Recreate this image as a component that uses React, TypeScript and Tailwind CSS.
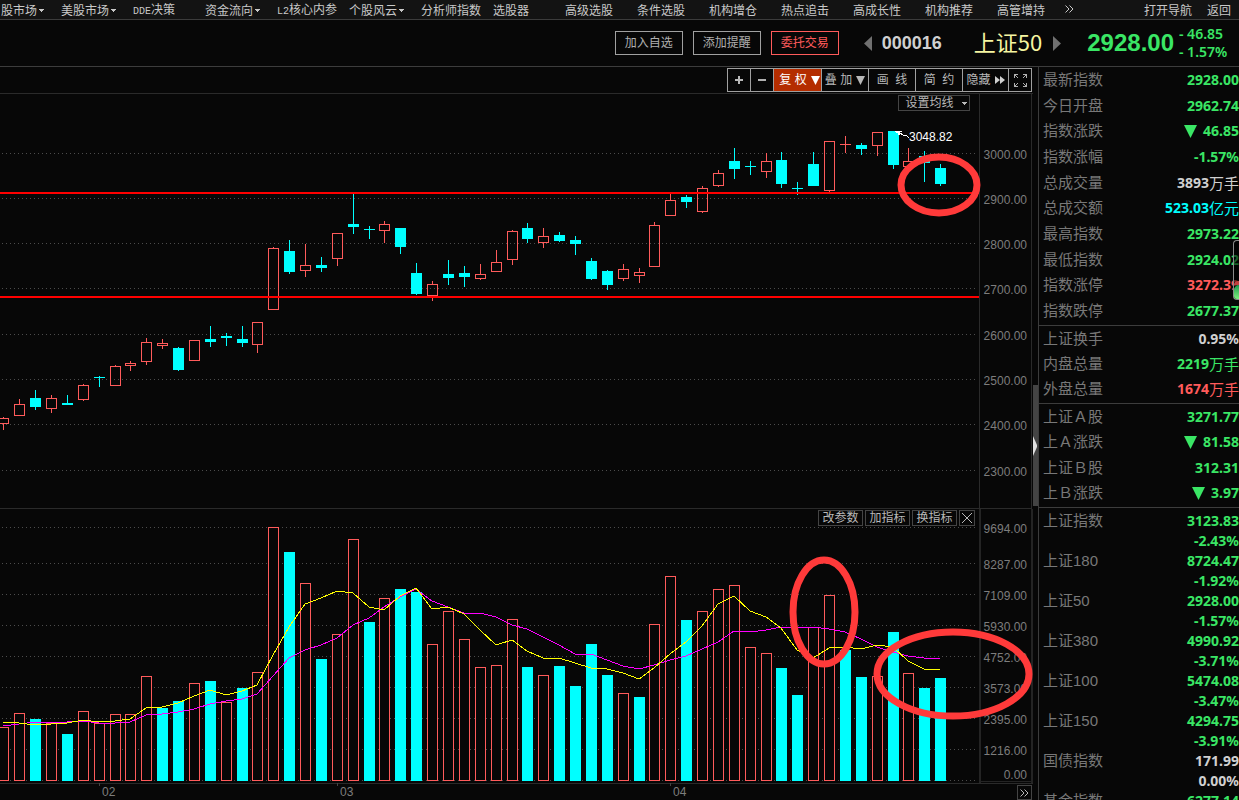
import React from 'react';
import { clsx } from 'clsx';

const UP = '#ff5b5b';
const DOWN = '#00ffff';
const MARK = '#ff3a3a';

/* [rising, high, body top, body bottom, low] */
type Candle = [0 | 1, number, number, number, number];

const CANDLES: Candle[] = [
    [1, 417, 418, 424, 430], [1, 399, 404, 416, 416], [0, 390, 398, 407, 410], [1, 395, 398, 409, 413],
    [0, 395, 403, 405, 405], [1, 384, 385, 400, 401], [0, 376, 377, 378, 387], [1, 365, 366, 386, 386],
    [1, 361, 363, 366, 371], [1, 338, 342, 362, 365], [1, 339, 343, 346, 349], [0, 347, 348, 370, 371],
    [1, 340, 340, 361, 361], [0, 326, 339, 342, 347], [0, 333, 336, 338, 346], [0, 326, 339, 343, 347],
    [1, 322, 322, 345, 353], [1, 247, 248, 310, 310], [0, 240, 251, 272, 274], [1, 244, 265, 271, 277],
    [0, 257, 265, 268, 272], [1, 233, 233, 259, 266], [0, 194, 224, 227, 234], [0, 226, 229, 230, 239],
    [1, 221, 224, 231, 243], [0, 228, 228, 247, 254], [0, 263, 273, 294, 295], [1, 281, 284, 296, 301],
    [0, 260, 274, 278, 285], [0, 266, 273, 277, 287], [1, 264, 274, 279, 280], [1, 250, 262, 272, 272],
    [1, 230, 231, 260, 265], [0, 223, 228, 239, 243], [1, 228, 236, 243, 248], [0, 232, 235, 241, 242],
    [0, 236, 240, 244, 255], [0, 258, 261, 279, 280], [0, 270, 271, 285, 290], [1, 264, 269, 279, 281],
    [1, 268, 272, 276, 283], [1, 222, 225, 267, 267], [1, 194, 200, 216, 216], [0, 195, 197, 202, 208],
    [1, 186, 188, 212, 213], [1, 170, 173, 186, 187], [0, 148, 161, 169, 179], [0, 161, 166, 167, 175],
    [1, 153, 161, 172, 178], [0, 152, 160, 184, 188], [0, 182, 188, 189, 195], [0, 152, 164, 186, 186],
    [1, 141, 141, 191, 192], [1, 136, 144, 145, 153], [0, 143, 145, 149, 155], [1, 132, 132, 146, 156],
    [0, 131, 131, 165, 169], [1, 148, 161, 167, 167], [0, 151, 156, 163, 182], [0, 164, 168, 184, 186],
];

/* [rising, bar top] */
const VOLUMES: [0 | 1, number][] = [
    [1, 727], [1, 713], [0, 719], [1, 723], [0, 734], [1, 711], [1, 723], [1, 714], [1, 714], [1, 676],
    [0, 708], [0, 701], [1, 683], [0, 681], [1, 702], [0, 688], [1, 672], [1, 527], [0, 552], [1, 583],
    [0, 659], [1, 634], [1, 539], [0, 622], [1, 598], [0, 589], [0, 592], [1, 644], [1, 611], [1, 639],
    [1, 667], [1, 665], [1, 619], [0, 667], [1, 675], [0, 666], [0, 686], [0, 644], [0, 675], [1, 693],
    [0, 697], [1, 624], [1, 576], [0, 620], [1, 611], [1, 589], [1, 585], [1, 647], [1, 653], [0, 668],
    [0, 695], [1, 627], [1, 595], [0, 650], [0, 677], [1, 676], [0, 632], [1, 673], [0, 688], [0, 678],
];

const MA5 = [
    722, 723, 725, 724, 723, 720, 722, 721, 719, 708, 707, 703, 696, 690, 695, 691, 685, 655, 627, 604,
    598, 591, 593, 607, 610, 596, 588, 609, 607, 614, 630, 645, 640, 651, 658, 658, 663, 668, 669, 673,
    679, 668, 654, 642, 626, 604, 596, 611, 617, 628, 650, 658, 648, 647, 649, 645, 647, 661, 669, 669,
];

const MA10 = [
    726, 724, 722, 722, 722, 721, 723, 723, 722, 715, 714, 712, 709, 704, 701, 699, 694, 676, 658, 650,
    645, 638, 625, 618, 607, 597, 589, 601, 607, 613, 613, 617, 625, 629, 637, 645, 654, 654, 660, 666,
    669, 665, 660, 656, 649, 642, 631, 632, 630, 627, 627, 627, 629, 632, 639, 647, 652, 656, 658, 659,
];

const PRICE_GRID: [number, string][] = [
    [153, '3000.00'], [198, '2900.00'], [243, '2800.00'], [288, '2700.00'],
    [334, '2600.00'], [379, '2500.00'], [424, '2400.00'], [470, '2300.00'],
];

const VOLUME_GRID: [number, string][] = [
    [527, '9694.00'], [563, '8287.00'], [594, '7109.00'], [625, '5930.00'], [656, '4752.00'],
    [687, '3573.00'], [718, '2395.00'], [749, '1216.00'], [780, '0.00'],
];

const MONTHS: [number, string][] = [[99, '02'], [337, '03'], [670, '04']];

const NAV: { label: string; latin?: string; menu?: boolean }[] = [
    { label: '股市场', menu: true },
    { label: '美股市场', menu: true },
    { latin: 'DDE', label: '决策' },
    { label: '资金流向', menu: true },
    { latin: 'L2', label: '核心内参' },
    { label: '个股风云', menu: true },
    { label: '分析师指数' },
    { label: '选股器' },
    { label: '高级选股' },
    { label: '条件选股' },
    { label: '机构增仓' },
    { label: '热点追击' },
    { label: '高成长性' },
    { label: '机构推荐' },
    { label: '高管增持' },
];

type Tone = 'green' | 'red' | 'white' | 'cyan';

interface Quote {
    label: string;
    value: string;
    unit?: string;
    tone: Tone;
    falling?: boolean;
}

const TONES: Record<Tone, string> = {
    green: 'text-[#3ae665]',
    red: 'text-[#ff5b5b]',
    white: 'text-[#d0d0d0]',
    cyan: 'text-[#00ffff]',
};

const TODAY: Quote[] = [
    { label: '最新指数', value: '2928.00', tone: 'green' },
    { label: '今日开盘', value: '2962.74', tone: 'green' },
    { label: '指数涨跌', value: '46.85', tone: 'green', falling: true },
    { label: '指数涨幅', value: '-1.57%', tone: 'green' },
    { label: '总成交量', value: '3893', unit: '万手', tone: 'white' },
    { label: '总成交额', value: '523.03', unit: '亿元', tone: 'cyan' },
    { label: '最高指数', value: '2973.22', tone: 'green' },
    { label: '最低指数', value: '2924.02', tone: 'green' },
    { label: '指数涨停', value: '3272.39', tone: 'red' },
    { label: '指数跌停', value: '2677.37', tone: 'green' },
];

const TURNOVER: Quote[] = [
    { label: '上证换手', value: '0.95%', tone: 'white' },
    { label: '内盘总量', value: '2219', unit: '万手', tone: 'green' },
    { label: '外盘总量', value: '1674', unit: '万手', tone: 'red' },
];

const SHARES: Quote[] = [
    { label: '上证Ａ股', value: '3271.77', tone: 'green' },
    { label: '上Ａ涨跌', value: '81.58', tone: 'green', falling: true },
    { label: '上证Ｂ股', value: '312.31', tone: 'green' },
    { label: '上Ｂ涨跌', value: '3.97', tone: 'green', falling: true },
];

const INDEXES: { label: string; value: string; change?: string; tone: Tone }[] = [
    { label: '上证指数', value: '3123.83', change: '-2.43%', tone: 'green' },
    { label: '上证180', value: '8724.47', change: '-1.92%', tone: 'green' },
    { label: '上证50', value: '2928.00', change: '-1.57%', tone: 'green' },
    { label: '上证380', value: '4990.92', change: '-3.71%', tone: 'green' },
    { label: '上证100', value: '5474.08', change: '-3.47%', tone: 'green' },
    { label: '上证150', value: '4294.75', change: '-3.91%', tone: 'green' },
    { label: '国债指数', value: '171.99', change: '0.00%', tone: 'white' },
    { label: '基金指数', value: '6277.14', tone: 'green' },
];

const barX = (i: number) => Math.round(3.38 + 15.879 * i);

const toPoints = (ys: number[]) => ys.map((y, i) => `${barX(i)},${y}`).join(' ');

const Caret: React.FC = () => (
    <svg width="5" height="3" viewBox="0 0 5 3" shapeRendering="crispEdges" className="shrink-0">
        <path d="M0 0H5V1H4V2H3V3H2V2H1V1H0Z" fill="currentColor" />
    </svg>
);

const GridLine: React.FC<{ y: number }> = ({ y }) => (
    <line x1="2" x2="976" y1={y + 0.5} y2={y + 0.5} stroke="#4c4c4c" strokeDasharray="1 3" shapeRendering="crispEdges" />
);

const AxisLabel: React.FC<{ y: number; children: React.ReactNode }> = ({ y, children }) => (
    <text x="1027" y={y} textAnchor="end" fill="#7d7d7d" className="text-[12px]">{children}</text>
);

const PriceChart: React.FC = () => (
    <svg viewBox="0 94 1033 414" className="block w-full" role="img" aria-label="上证50 日K线">
        {PRICE_GRID.map(([y, label]) => (
            <g key={label}>
                <GridLine y={y} />
                <AxisLabel y={y + 6}>{label}</AxisLabel>
            </g>
        ))}
        <g shapeRendering="crispEdges">
            <rect x="979" y="94" width="1" height="414" fill="#2a2a2a" />
            <rect x="1031" y="94" width="1" height="414" fill="#2a2a2a" />
            {CANDLES.map(([rising, high, top, bottom, low], i) => {
                const x = barX(i);
                const color = rising ? UP : DOWN;
                const hollow = rising === 1 && bottom - top > 1;
                return (
                    <g key={i} fill={color}>
                        <rect x={x} y={high} width="1" height={top - high} />
                        <rect x={x} y={bottom} width="1" height={low - bottom} />
                        {hollow ? (
                            <rect x={x - 4.5} y={top + 0.5} width="10" height={bottom - top - 1} fill="none" stroke={color} />
                        ) : (
                            <rect x={x - 5} y={top} width="11" height={bottom - top} />
                        )}
                    </g>
                );
            })}
            <rect x="0" y="192" width="979" height="2" fill="#ff0000" />
            <rect x="0" y="296" width="979" height="2" fill="#ff0000" />
            {/* pointer to the period high */}
            <path d="M895 131h7v1h-2v1h1v1h-1v1h-2v-2h-2v-1h-1z" fill="#fff" />
            <path d="M899 132.5L904 135.5H906L909 137.5" fill="none" stroke="#fff" />
        </g>
        <text x="909" y="141" fill="#fff" className="text-[12px]">3048.82</text>
        <ellipse cx="939" cy="185" rx="38" ry="28" fill="none" stroke={MARK} strokeWidth="7" />
    </svg>
);

const VolumeChart: React.FC = () => (
    <svg viewBox="0 508 1033 292" className="block w-full" role="img" aria-label="成交量">
        <g shapeRendering="crispEdges">
            <rect x="0" y="508" width="1032" height="1" fill="#2a2a2a" />
            <rect x="979" y="509" width="2" height="274" fill="#242424" />
            <rect x="1031" y="509" width="2" height="274" fill="#242424" />
            <rect x="981" y="781" width="50" height="1" fill="#242424" />
            <rect x="0" y="783" width="1033" height="1" fill="#2a2a2a" />
        </g>
        {VOLUME_GRID.map(([y, label]) => (
            <g key={label}>
                <GridLine y={y} />
                <AxisLabel y={label === '0.00' ? 779 : y + 6}>{label}</AxisLabel>
            </g>
        ))}
        <g shapeRendering="crispEdges">
            {VOLUMES.map(([rising, top], i) =>
                rising ? (
                    <rect key={i} x={barX(i) - 4.5} y={top + 0.5} width="10" height={780 - top} fill="#070707" stroke={UP} />
                ) : (
                    <rect key={i} x={barX(i) - 5} y={top} width="11" height={781 - top} fill={DOWN} />
                ),
            )}
            <polyline points={toPoints(MA10)} fill="none" stroke="#ff00ff" />
            <polyline points={toPoints(MA5)} fill="none" stroke="#ffff00" />
        </g>
        {MONTHS.map(([x, label]) => (
            <g key={label}>
                <rect x={x} y="783" width="1" height="3" fill="#444" />
                <text x={x + 3} y="796" fill="#7d7d7d" className="text-[12px]">{label}</text>
            </g>
        ))}
        <ellipse cx="824" cy="612" rx="31" ry="52" fill="none" stroke={MARK} strokeWidth="7" />
        <ellipse cx="953" cy="674" rx="76" ry="42" fill="none" stroke={MARK} strokeWidth="7" />
    </svg>
);

const ToolButton: React.FC<{ label: string; className: string; children: React.ReactNode }> = ({ label, className, children }) => (
    <button
        type="button"
        aria-label={label}
        className={clsx('flex items-center justify-center border-r border-[#a0a0a0] text-[12px] whitespace-pre', className)}
    >
        {children}
    </button>
);

const Toolbar: React.FC = () => (
    <div className="flex h-[27px] shrink-0 justify-end border-b border-[#2a2a2a] pt-px pr-px">
        <div className="flex h-6 border border-r-0 border-[#a0a0a0] text-[#b8b8b8]">
            <ToolButton label="放大" className="w-[23px]">
                <svg width="8" height="8" viewBox="0 0 8 8" shapeRendering="crispEdges">
                    <path d="M0 3h8v2H0zM3 0h2v8H3z" fill="#b8b8b8" />
                </svg>
            </ToolButton>
            <ToolButton label="缩小" className="w-[23px]">
                <svg width="8" height="2" viewBox="0 0 8 2" shapeRendering="crispEdges">
                    <path d="M0 0h8v2H0z" fill="#b0b0b0" />
                </svg>
            </ToolButton>
            <ToolButton label="复权" className="w-12 gap-1 bg-[#b42d00] pl-1 text-white">
                复 权
                <svg width="9" height="9" viewBox="0 0 9 9"><path d="M0 0h9L4.500 9z" fill="currentColor" /></svg>
            </ToolButton>
            <ToolButton label="叠加" className="w-[47px] gap-1">
                叠 加
                <svg width="9" height="9" viewBox="0 0 9 9"><path d="M0 0h9L4.500 9z" fill="currentColor" /></svg>
            </ToolButton>
            <ToolButton label="画线" className="w-[47px]">{'画  线'}</ToolButton>
            <ToolButton label="简约" className="w-[47px]">{'简  约'}</ToolButton>
            <ToolButton label="隐藏" className="w-[46px] gap-1">
                隐藏
                <svg width="10" height="8" viewBox="0 0 10 8"><path d="M0 0l5 4-5 4zM5 0l5 4-5 4z" fill="#d0d0d0" /></svg>
            </ToolButton>
            <ToolButton label="全屏" className="w-[23px]">
                <svg width="13" height="13" viewBox="0 0 13 13" fill="none" stroke="#b0b0b0" shapeRendering="crispEdges">
                    <path d="M0.500 4V0.500H4M9 0.500H12.500V4M12.500 9V12.500H9M4 12.500H0.500V9" />
                    <path d="M1 1l3 3M12 1L9 4M12 12L9 9M1 12l3-3" />
                </svg>
            </ToolButton>
        </div>
    </div>
);

const chip = 'flex h-4 items-center justify-center border border-[#444] bg-[#070707] text-[12px] leading-none text-[#b8b8b8]';

const QuoteRow: React.FC<{ quote: Quote }> = ({ quote }) => (
    <div className="flex items-center justify-between whitespace-nowrap">
        <dt className="text-[15px] leading-5 text-[#787878]">{quote.label}</dt>
        <dd className={clsx('flex items-center text-[14px] leading-5 font-bold font-[Noto_Sans,sans-serif]', TONES[quote.tone])}>
            {quote.falling && (
                <svg width="13" height="13" viewBox="0 0 13 13" className="mr-[6px]">
                    <path d="M0 0H13L6.500 13z" fill="currentColor" />
                </svg>
            )}
            {quote.value}
            {quote.unit && (
                <span className="text-[15px] font-normal font-[Noto_Sans_CJK_SC,sans-serif]">{quote.unit}</span>
            )}
        </dd>
    </div>
);

const Sidebar: React.FC = () => (
    <aside className="relative w-[201px] shrink-0 overflow-hidden border-l border-[#3c3c3c]">
        <dl className="grid h-[259px] auto-rows-fr border-b border-[#3c3c3c] pb-px pl-1">
            {TODAY.map((q) => <QuoteRow key={q.label} quote={q} />)}
        </dl>
        <dl className="grid h-[78px] auto-rows-fr border-b border-[#3c3c3c] pb-px pl-1">
            {TURNOVER.map((q) => <QuoteRow key={q.label} quote={q} />)}
        </dl>
        <dl className="grid h-[104px] auto-rows-fr border-b border-[#3c3c3c] pb-px pl-1">
            {SHARES.map((q) => <QuoteRow key={q.label} quote={q} />)}
        </dl>
        <dl className="pt-[3px] pl-1">
            {INDEXES.map((row) => (
                <div key={row.label} className="flex justify-between text-[14px] leading-5">
                    <dt className="text-[15px] text-[#787878]">{row.label}</dt>
                    <dd className={clsx('text-right font-bold font-[Noto_Sans,sans-serif]', TONES[row.tone])}>
                        <div>{row.value}</div>
                        {row.change && <div>{row.change}</div>}
                    </dd>
                </div>
            ))}
        </dl>

        {/* Floating meter docked at the window edge */}
        <div className="absolute top-[173px] right-0 flex h-[60px] w-[6px] flex-col justify-end overflow-hidden rounded-l border border-r-0 border-[#8a8a8a] bg-black/60">
            <div className="h-1 rounded-tl-full bg-[#c04040]" />
            <div className="h-[14px] rounded-tl-full bg-linear-to-b from-[#0f9a50] to-[#7df07d]" />
        </div>
    </aside>
);

export default function App() {
    return (
        <div className="flex h-screen flex-col overflow-hidden bg-[#070707] font-[Liberation_Sans,Noto_Sans_CJK_SC,sans-serif]">
            {/* Top menu */}
            <nav className="flex h-5 shrink-0 items-center justify-between overflow-hidden border-b border-[#3c3c3c] bg-[#131313] pt-[2px] pr-2 text-[12px] leading-none text-[#c8c8c8]">
                <div className="flex items-center">
                    {NAV.map((item, i) => (
                        <a
                            key={item.label}
                            href="#"
                            className={clsx('flex shrink-0 items-center gap-[2px] whitespace-nowrap', i === 0 ? 'w-[61px] pl-px' : 'w-18')}
                        >
                            <span>
                                {item.latin && <span className="text-[10px] font-[Liberation_Mono,monospace]">{item.latin}</span>}
                                {item.label}
                            </span>
                            {item.menu && <Caret />}
                        </a>
                    ))}
                    <button type="button" aria-label="更多" className="-ml-1 shrink-0 pb-1">
                        <svg width="9" height="8" viewBox="0 0 9 8" fill="none" stroke="currentColor">
                            <path d="M0.500 0.500L4 4L0.500 7.500M4.500 0.500L8 4L4.500 7.500" />
                        </svg>
                    </button>
                </div>
                <div className="flex shrink-0 gap-[15px]">
                    <a href="#">打开导航</a>
                    <a href="#">返回</a>
                </div>
            </nav>

            {/* Quote header */}
            <header className="flex h-[47px] shrink-0 items-center justify-end border-b border-[#3c3c3c] pr-3">
                <div className="flex gap-[10px] text-[12px] text-[#b0b0b0]">
                    <button type="button" className="h-6 w-17 border border-[#a0a0a0]">加入自选</button>
                    <button type="button" className="h-6 w-17 border border-[#a0a0a0]">添加提醒</button>
                    <button type="button" className="h-6 w-17 border border-[#ff5b5b] text-[#ff5b5b]">委托交易</button>
                </div>
                <button type="button" aria-label="上一只" className="ml-[25px] text-[#707070]">
                    <svg width="8" height="15" viewBox="0 0 8 15"><path d="M8 0V15L0 7.500z" fill="currentColor" /></svg>
                </button>
                <span className="ml-[10px] text-[18px] font-bold text-[#d0d0d0]">000016</span>
                <h1 className="ml-8 pb-1 text-[22px] leading-6 text-[#f5f5a0] font-[Noto_Sans_CJK_SC,sans-serif]">上证50</h1>
                <button type="button" aria-label="下一只" className="ml-[11px] text-[#707070]">
                    <svg width="8" height="15" viewBox="0 0 8 15"><path d="M0 0V15L8 7.500z" fill="currentColor" /></svg>
                </button>
                <span className="ml-[26px] text-[24px] leading-6 font-bold text-[#3ae665]">2928.00</span>
                <div className="ml-[5px] w-12 text-[14px] leading-[18px] font-semibold whitespace-nowrap text-[#3ae665] font-[Noto_Sans,sans-serif]">
                    <div>- 46.85</div>
                    <div>- 1.57%</div>
                </div>
            </header>

            <div className="flex min-h-0 flex-1">
                <main className="min-w-0 flex-1 overflow-hidden">
                    <Toolbar />
                    <section className="relative">
                        <PriceChart />
                        <button type="button" className={clsx(chip, 'absolute top-px right-[63px] w-18 gap-2 pl-1')}>
                            设置均线
                            <Caret />
                        </button>
                    </section>
                    <section className="relative">
                        <VolumeChart />
                        <div className="absolute top-[2px] right-[58px] flex gap-[2px]">
                            <button type="button" className={clsx(chip, 'w-[45px]')}>改参数</button>
                            <button type="button" className={clsx(chip, 'w-[45px]')}>加指标</button>
                            <button type="button" className={clsx(chip, 'w-[45px]')}>换指标</button>
                            <button type="button" aria-label="关闭" className={clsx(chip, 'w-4')}>
                                <svg width="10" height="10" viewBox="0 0 10 10" stroke="currentColor"><path d="M0 0L10 10M10 0L0 10" /></svg>
                            </button>
                        </div>
                        <button type="button" aria-label="展开" className={clsx(chip, 'absolute right-px bottom-0 h-[15px] w-[15px]')}>
                            <svg width="9" height="8" viewBox="0 0 9 8" fill="none" stroke="currentColor">
                                <path d="M0.500 0.500L4 4L0.500 7.500M4.500 0.500L8 4L4.500 7.500" />
                            </svg>
                        </button>
                    </section>
                </main>

                {/* Splitter between chart and quotes */}
                <div className="w-[5px] shrink-0 pt-[318px]">
                    <button type="button" aria-label="收起侧栏" className="flex h-[121px] w-full items-center bg-[#444]">
                        <svg width="4" height="20" viewBox="0 0 4 20"><path d="M0 0L4 9V11L0 20z" fill="#e0e0e0" /></svg>
                    </button>
                </div>

                <Sidebar />
            </div>
        </div>
    );
}
